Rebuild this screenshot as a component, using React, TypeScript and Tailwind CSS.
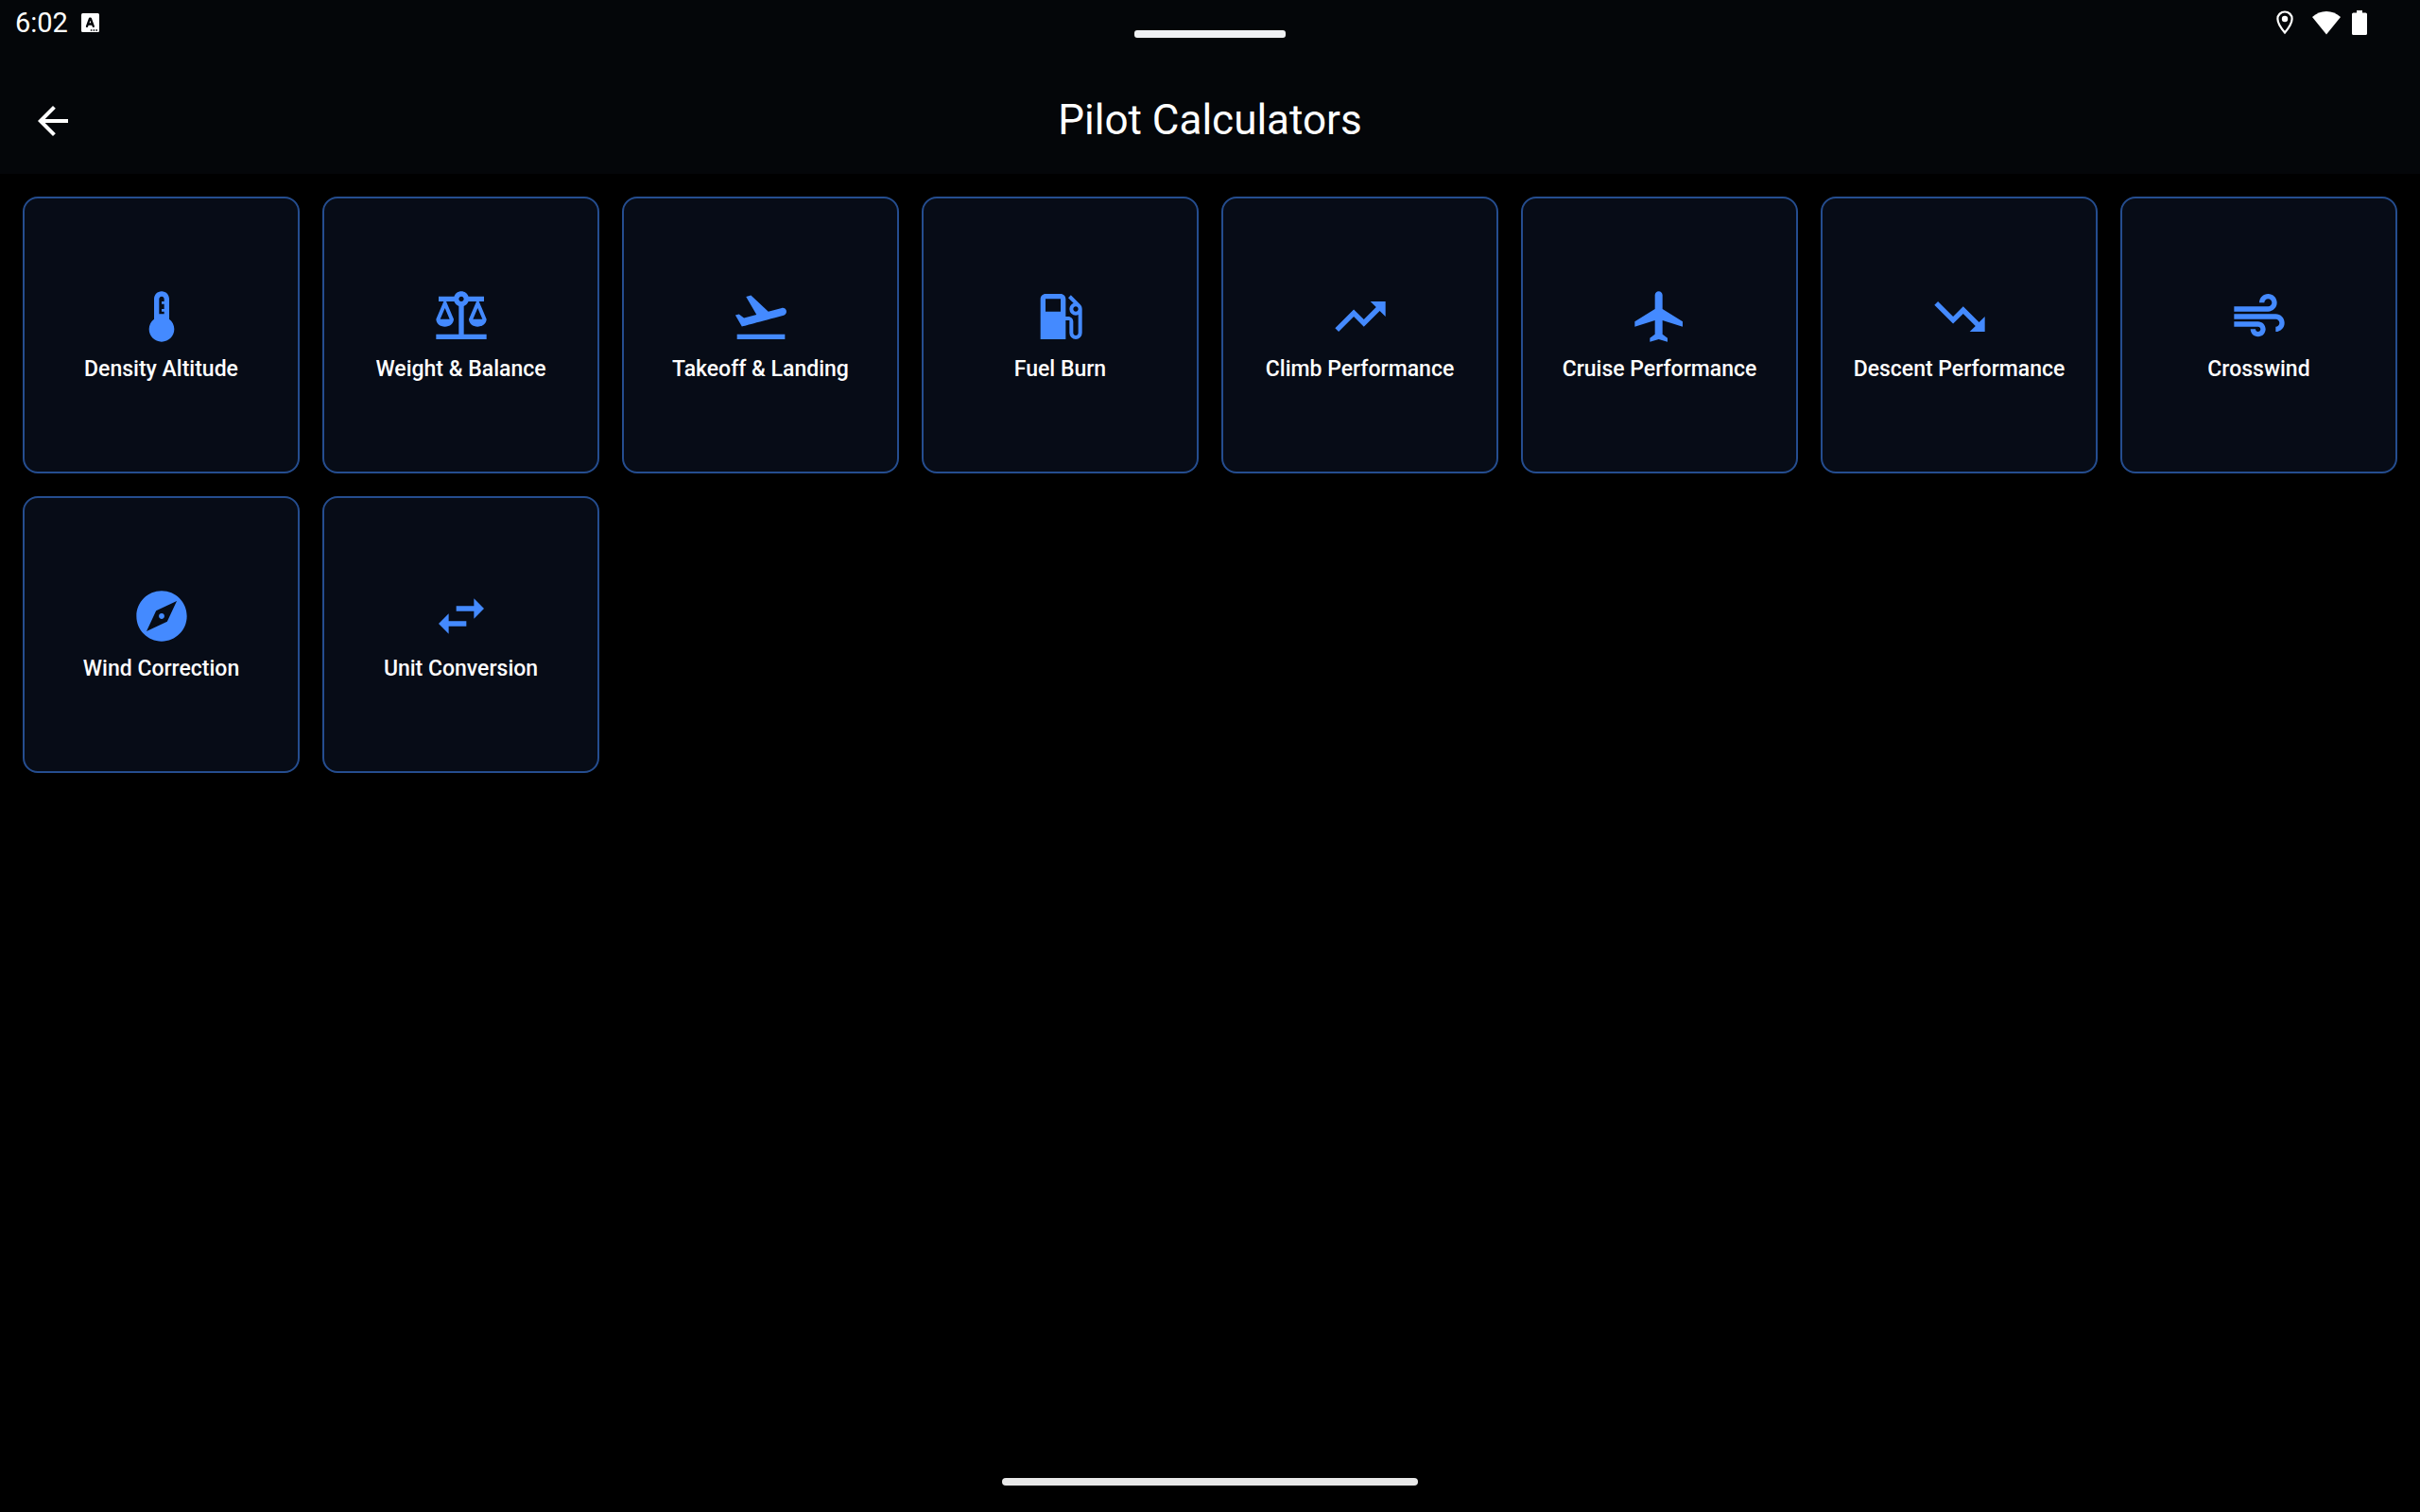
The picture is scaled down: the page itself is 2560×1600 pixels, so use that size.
import type { IconType } from "react-icons";
import {
  MdAir,
  MdArrowBack,
  MdBalance,
  MdExplore,
  MdFlight,
  MdFlightTakeoff,
  MdLocalGasStation,
  MdSwapHoriz,
  MdThermostat,
  MdTrendingDown,
  MdTrendingUp,
} from "react-icons/md";

const calculators: { label: string; icon: IconType }[] = [
  { label: "Density Altitude", icon: MdThermostat },
  { label: "Weight & Balance", icon: MdBalance },
  { label: "Takeoff & Landing", icon: MdFlightTakeoff },
  { label: "Fuel Burn", icon: MdLocalGasStation },
  { label: "Climb Performance", icon: MdTrendingUp },
  { label: "Cruise Performance", icon: MdFlight },
  { label: "Descent Performance", icon: MdTrendingDown },
  { label: "Crosswind", icon: MdAir },
  { label: "Wind Correction", icon: MdExplore },
  { label: "Unit Conversion", icon: MdSwapHoriz },
];

function KeyboardBadge() {
  return (
    <svg viewBox="0 0 19 20" className="h-5 w-[19px]" aria-hidden="true">
      <rect width="19" height="20" rx="1.5" fill="#fff" />
      <path
        d="M6 13.800 9 5.600h.8l3 8.200M7.500 11.500h4"
        fill="none"
        stroke="#040609"
        strokeWidth="2.300"
        strokeLinecap="round"
        strokeLinejoin="round"
      />
      <path
        d="M9.800 17.200h1.600v1.600H9.800zM12.600 17.200h1.600v1.600h-1.600zM15.400 17.200H17v1.600h-1.600z"
        fill="#040609"
      />
    </svg>
  );
}

function LocationPin() {
  return (
    <svg viewBox="0 0 18 26" className="h-[26px] w-[18px]" aria-hidden="true">
      <path
        d="M9 1.500c-4.200 0-7.600 3.300-7.600 7.400C1.400 14.300 9 23.500 9 23.500s7.600-9.200 7.600-14.600C16.600 4.800 13.200 1.500 9 1.500z"
        fill="none"
        stroke="#fff"
        strokeWidth="2.200"
      />
      <circle cx="9" cy="9" r="3.200" fill="#fff" />
    </svg>
  );
}

function Wifi() {
  return (
    <svg viewBox="0 0 30 26" className="h-[26px] w-[30px]" aria-hidden="true">
      <path d="M15 25.500 0 7C4.200 3 9.400 1 15 1s10.800 2 15 6z" fill="#fff" />
    </svg>
  );
}

function Battery() {
  return (
    <svg viewBox="0 0 16 26" className="h-[26px] w-4" aria-hidden="true">
      <path
        d="M5 0h6v2.500h3.500A1.500 1.500 0 0 1 16 4v20.500a1.500 1.500 0 0 1-1.500 1.500h-13A1.500 1.500 0 0 1 0 24.500V4a1.500 1.500 0 0 1 1.500-1.500H5z"
        fill="#fff"
      />
    </svg>
  );
}

export default function App() {
  return (
    <div className="flex min-h-screen flex-col bg-black font-[Roboto,sans-serif] text-white">
      <header className="bg-[#040609]">
        <div className="grid h-[72px] grid-cols-[1fr_auto_1fr] items-start px-4">
          <div className="flex h-12 items-center gap-3.5">
            <span className="text-[29px] leading-8">6:02</span>
            <KeyboardBadge />
          </div>
          <div className="mt-8 h-2 w-40 rounded-[3px] bg-[#f0f1f3]" />
          <div className="flex h-12 items-center justify-end pr-10">
            <LocationPin />
            <span className="w-5" />
            <Wifi />
            <span className="w-3" />
            <Battery />
          </div>
        </div>
        <div className="grid h-28 grid-cols-[1fr_auto_1fr] items-center px-8">
          <button
            type="button"
            aria-label="Back"
            className="flex size-12 items-center justify-center"
          >
            <MdArrowBack className="size-12" />
          </button>
          <h1 className="pb-0.5 text-[44px] leading-14 font-normal">Pilot Calculators</h1>
        </div>
      </header>

      <main className="grid grow auto-rows-min grid-cols-8 gap-6 p-6">
        {calculators.map(({ label, icon: Icon }) => (
          <button
            key={label}
            type="button"
            className="flex aspect-square flex-col items-center justify-center gap-2 rounded-2xl border-2 border-[#254d8f] bg-[#070c17]"
          >
            <Icon className="size-16 text-[#448aff]" />
            <span className="text-[23px] leading-8 font-medium">{label}</span>
          </button>
        ))}
      </main>

      <footer className="flex justify-center pb-7">
        <div className="h-2 w-[440px] rounded-full bg-[#e8e8e8]" />
      </footer>
    </div>
  );
}
